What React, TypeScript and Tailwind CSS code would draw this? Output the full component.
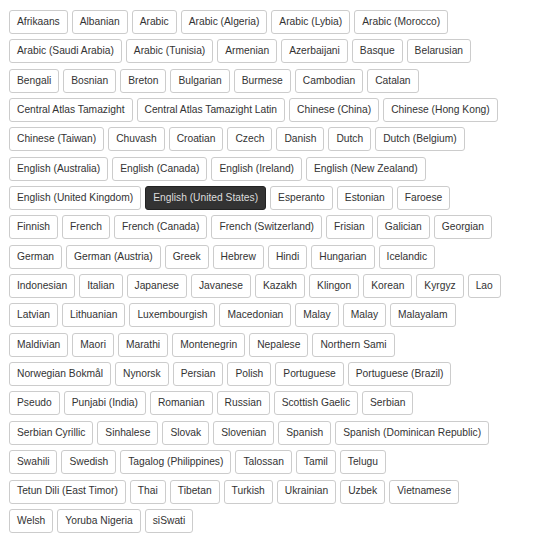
import React from "react";

const rows: string[][] = [
  ["Afrikaans", "Albanian", "Arabic", "Arabic (Algeria)", "Arabic (Lybia)", "Arabic (Morocco)"],
  ["Arabic (Saudi Arabia)", "Arabic (Tunisia)", "Armenian", "Azerbaijani", "Basque", "Belarusian"],
  ["Bengali", "Bosnian", "Breton", "Bulgarian", "Burmese", "Cambodian", "Catalan"],
  ["Central Atlas Tamazight", "Central Atlas Tamazight Latin", "Chinese (China)", "Chinese (Hong Kong)"],
  ["Chinese (Taiwan)", "Chuvash", "Croatian", "Czech", "Danish", "Dutch", "Dutch (Belgium)"],
  ["English (Australia)", "English (Canada)", "English (Ireland)", "English (New Zealand)"],
  ["English (United Kingdom)", "English (United States)", "Esperanto", "Estonian", "Faroese"],
  ["Finnish", "French", "French (Canada)", "French (Switzerland)", "Frisian", "Galician", "Georgian"],
  ["German", "German (Austria)", "Greek", "Hebrew", "Hindi", "Hungarian", "Icelandic"],
  ["Indonesian", "Italian", "Japanese", "Javanese", "Kazakh", "Klingon", "Korean", "Kyrgyz", "Lao"],
  ["Latvian", "Lithuanian", "Luxembourgish", "Macedonian", "Malay", "Malay", "Malayalam"],
  ["Maldivian", "Maori", "Marathi", "Montenegrin", "Nepalese", "Northern Sami"],
  ["Norwegian Bokmål", "Nynorsk", "Persian", "Polish", "Portuguese", "Portuguese (Brazil)"],
  ["Pseudo", "Punjabi (India)", "Romanian", "Russian", "Scottish Gaelic", "Serbian"],
  ["Serbian Cyrillic", "Sinhalese", "Slovak", "Slovenian", "Spanish", "Spanish (Dominican Republic)"],
  ["Swahili", "Swedish", "Tagalog (Philippines)", "Talossan", "Tamil", "Telugu"],
  ["Tetun Dili (East Timor)", "Thai", "Tibetan", "Turkish", "Ukrainian", "Uzbek", "Vietnamese"],
  ["Welsh", "Yoruba Nigeria", "siSwati"],
];

export default function App() {
  return (
    <div
      className="min-h-[540px] w-[544px] bg-white pl-[9px] pt-[10px]"
      style={{ fontFamily: '"Liberation Sans", Arial, sans-serif' }}
    >
      <div className="flex flex-col gap-y-[5.35px]">
        {rows.map((row, i) => (
          <div key={i} className="flex gap-x-[4px]">
            {row.map((name, j) => {
              const active = name === "English (United States)";
              return (
                <button
                  key={j}
                  className={
                    active
                      ? "h-[24px] whitespace-nowrap rounded-[3px] border border-[#222] bg-[#333] px-[7px] text-[10.25px] leading-none text-[#ddd]"
                      : "h-[24px] whitespace-nowrap rounded-[3px] border border-[#ccc] bg-white px-[7px] text-[10.25px] leading-none text-[#333]"
                  }
                >
                  {name}
                </button>
              );
            })}
          </div>
        ))}
      </div>
    </div>
  );
}
